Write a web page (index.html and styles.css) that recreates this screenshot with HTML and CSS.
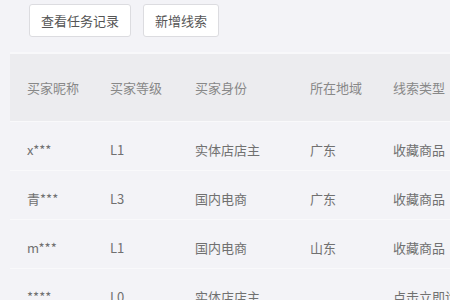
FILE: index.html
```html
<!DOCTYPE html>
<html lang="zh-CN">
  <head>
    <meta charset="UTF-8" />
    <title>线索列表</title>
    <link rel="stylesheet" href="styles.css">
  </head>
  <body>
    <div class="page">
      <div class="toolbar">
        <button class="btn">查看任务记录</button>
        <button class="btn">新增线索</button>
      </div>

      <table class="lead-table">
        <colgroup>
          <col class="c-name">
          <col class="c-level">
          <col class="c-role">
          <col class="c-area">
          <col class="c-type">
        </colgroup>
        <thead>
          <tr>
            <th>买家昵称</th>
            <th>买家等级</th>
            <th>买家身份</th>
            <th>所在地域</th>
            <th>线索类型</th>
          </tr>
        </thead>
        <tbody>
          <tr>
            <td>x***</td>
            <td>L1</td>
            <td>实体店店主</td>
            <td>广东</td>
            <td>收藏商品</td>
          </tr>
          <tr>
            <td>青***</td>
            <td>L3</td>
            <td>国内电商</td>
            <td>广东</td>
            <td>收藏商品</td>
          </tr>
          <tr>
            <td>m***</td>
            <td>L1</td>
            <td>国内电商</td>
            <td>山东</td>
            <td>收藏商品</td>
          </tr>
          <tr>
            <td>****</td>
            <td>L0</td>
            <td>实体店店主</td>
            <td></td>
            <td>点击立即询价</td>
          </tr>
        </tbody>
      </table>
    </div>
  </body>
</html>
```

FILE: styles.css
```css
html, body {
  margin: 0;
  background: #f3f3f7;
  overflow: hidden;
}

body {
  font-family: "Noto Sans CJK SC", "Noto Sans", sans-serif;
  font-size: 13px;
  color: #707070;
}

.page {
  padding: 4px 0 0 10px;
}

.toolbar {
  display: flex;
  gap: 12px;
  padding-left: 19px;
  margin-bottom: 15px;
}

.btn {
  height: 33px;
  padding: 0 11px;
  font-family: inherit;
  font-size: 13px;
  color: #555;
  background: #fff;
  border: 1px solid #dcdce0;
  border-radius: 3px;
}

.lead-table {
  width: 470px;
  table-layout: fixed;
  border-collapse: collapse;
  border-top: 2px solid #f8f8fa;
}

.lead-table th,
.lead-table td {
  text-align: left;
  padding: 0 0 0 17px;
  white-space: nowrap;
  overflow: hidden;
}

.lead-table th {
  height: 67px;
  font-weight: normal;
  color: #888;
  background: #ececef;
}

.lead-table td {
  height: 42px;
  padding-top: 6px;
  border-top: 1px solid #f9f9fb;
}

.c-name { width: 83px; }
.c-level { width: 85px; }
.c-role { width: 115px; }
.c-area { width: 83px; }
```
